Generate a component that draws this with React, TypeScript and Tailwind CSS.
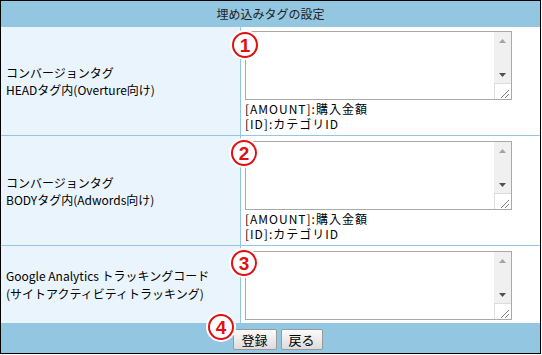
const FONT = "font-['Noto_Sans_CJK_JP','Noto_Sans',sans-serif]"

// 스크롤바 모양까지 그린 가짜 textarea
function FakeTextarea() {
  return (
    <div className="flex h-[69px] w-[267px] border border-[#a9a9a9] bg-white">
      <div className="flex-1" />
      <div className="flex w-[17px] flex-col bg-[#f0f0f0]">
        <div className="flex h-[17px] items-center justify-center">
          <svg width="7" height="4" viewBox="0 0 7 4">
            <polygon points="3.5,0 7,4 0,4" fill="#a3a3a3" />
          </svg>
        </div>
        <div className="flex-1" />
        <div className="flex h-[17px] items-center justify-center">
          <svg width="7" height="4" viewBox="0 0 7 4">
            <polygon points="0,0 7,0 3.5,4" fill="#505050" />
          </svg>
        </div>
        <div className="h-[16px] border-l border-t border-[#dcdcdc] bg-white">
          <svg width="16" height="16" viewBox="0 0 16 16">
            <line x1="14" y1="6" x2="6" y2="14" stroke="#808080" strokeWidth="1" />
            <line x1="14" y1="10" x2="10" y2="14" stroke="#808080" strokeWidth="1" />
          </svg>
        </div>
      </div>
    </div>
  )
}

function Notes() {
  return (
    <p className="mt-[1px] text-[12px] leading-[15px] tracking-[1px] text-black">
      [AMOUNT]:購入金額
      <br />
      [ID]:カテゴリID
    </p>
  )
}

function Marker({ n, className }: { n: string; className: string }) {
  return (
    <div
      className={`absolute flex h-[26px] w-[26px] items-center justify-center rounded-full border-2 border-[#e01010] bg-white shadow-[0_0_0_2px_white] ${className}`}
    >
      <span className="font-['Liberation_Sans',Arial,sans-serif] text-[19px] leading-none font-bold text-[#e01010]">
        {n}
      </span>
    </div>
  )
}

export default function App() {
  return (
    <div className={`relative h-[354px] w-[541px] border border-black bg-white ${FONT} text-[12px] text-black`}>
      <div className="flex h-[26px] items-center justify-center bg-[#93c6e1] text-[12px] text-[#222]">
        埋め込みタグの設定
      </div>

      {/* 1: HEAD */}
      <div className="flex h-[109px] border-b border-[#92c6e2]">
        <div className="flex w-[240px] items-center border-r border-[#92c6e2] bg-[#eaf4fc] pl-[5px]">
          <p className="leading-[17px]">
            コンバージョンタグ
            <br />
            HEADタグ内(Overture向け)
          </p>
        </div>
        <div className="flex-1 pl-[4px] pt-[4px]">
          <FakeTextarea />
          <Notes />
        </div>
      </div>

      {/* 2: BODY */}
      <div className="flex h-[110px] border-b border-[#92c6e2]">
        <div className="flex w-[240px] items-center border-r border-[#92c6e2] bg-[#eaf4fc] pl-[5px]">
          <p className="leading-[17px]">
            コンバージョンタグ
            <br />
            BODYタグ内(Adwords向け)
          </p>
        </div>
        <div className="flex-1 pl-[4px] pt-[5px]">
          <FakeTextarea />
          <Notes />
        </div>
      </div>

      {/* 3: GA */}
      <div className="flex h-[77px]">
        <div className="flex w-[240px] items-center border-r border-[#92c6e2] bg-[#eaf4fc] pl-[5px]">
          <p className="leading-[18px]">
            Google Analytics トラッキングコード
            <br />
            (サイトアクティビティトラッキング)
          </p>
        </div>
        <div className="flex-1 pl-[4px] pt-[5px]">
          <FakeTextarea />
        </div>
      </div>

      <div className="flex h-[30px] items-start justify-center gap-[4px] bg-[#93c6e1] pl-[14px] pt-[6px]">
        <button
          type="button"
          className="h-[21px] w-[44px] rounded-[2px] border border-[#9a9a9a] bg-gradient-to-b from-[#fbfbfb] to-[#dcdcdc] text-[13px] leading-none text-black"
        >
          登録
        </button>
        <button
          type="button"
          className="h-[21px] w-[42px] rounded-[2px] border border-[#9a9a9a] bg-gradient-to-b from-[#fbfbfb] to-[#dcdcdc] text-[13px] leading-none text-black"
        >
          戻る
        </button>
      </div>

      <Marker n="1" className="left-[231px] top-[31px]" />
      <Marker n="2" className="left-[230px] top-[139px]" />
      <Marker n="3" className="left-[230px] top-[249px]" />
      <Marker n="4" className="left-[207px] top-[313px]" />
    </div>
  )
}
